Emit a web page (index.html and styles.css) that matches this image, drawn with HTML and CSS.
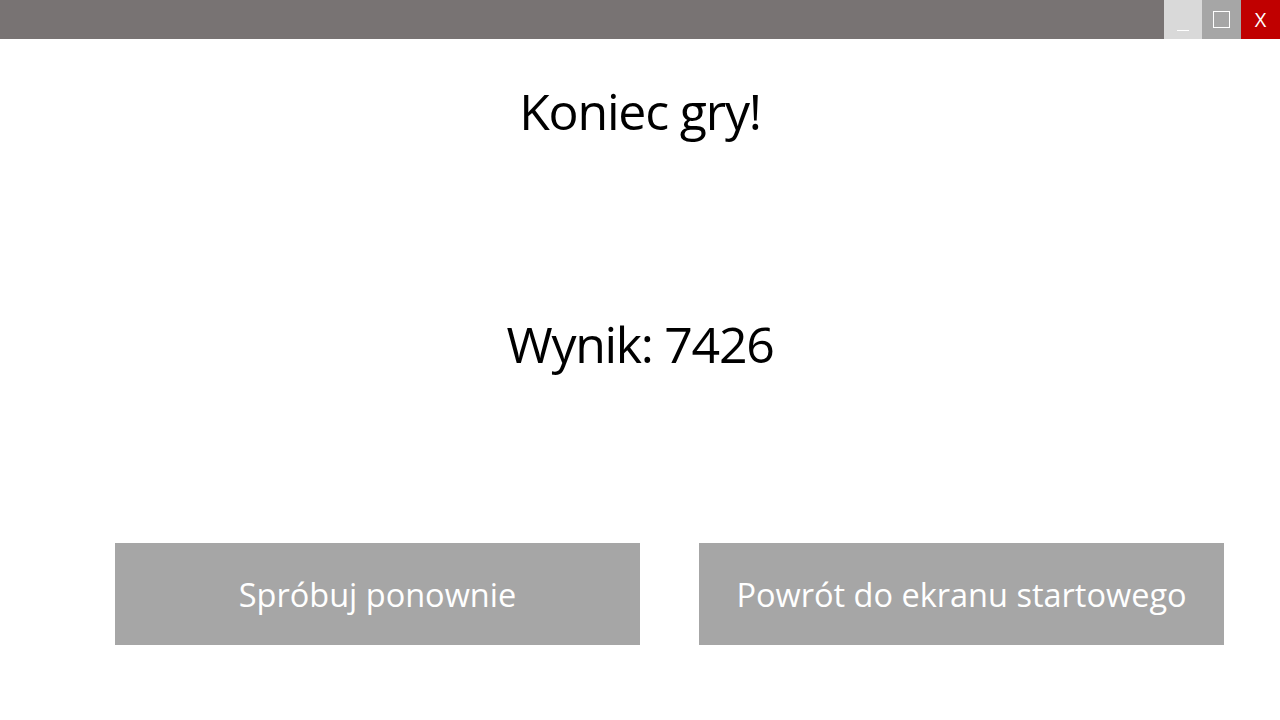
FILE: index.html
```html
<!DOCTYPE html>
<html lang="pl">
<head>
<meta charset="utf-8">
<title>Koniec gry</title>
<link rel="stylesheet" href="styles.css">
</head>
<body>
<div class="app">
  <header class="titlebar">
    <div class="win-controls">
      <div class="ctl ctl-min"><span class="min-line"></span></div>
      <div class="ctl ctl-max"><span class="max-box"></span></div>
      <div class="ctl ctl-close">X</div>
    </div>
  </header>
  <main class="content">
    <h1 class="title">Koniec gry!</h1>
    <div class="score">Wynik: 7426</div>
    <div class="actions">
      <div class="btn">Spróbuj ponownie</div>
      <div class="btn">Powrót do ekranu startowego</div>
    </div>
  </main>
</div>
</body>
</html>
```
FILE: styles.css
```css
* { box-sizing: border-box; }
html, body { margin: 0; padding: 0; }
body {
  width: 1280px;
  height: 720px;
  overflow: hidden;
  background: #ffffff;
  font-family: "Open Sans", "Noto Sans", sans-serif;
  color: #000;
}
.app { display: flex; flex-direction: column; height: 720px; }
.titlebar {
  height: 39px;
  background: #787373;
  display: flex;
  justify-content: flex-end;
}
.win-controls { display: flex; }
.ctl {
  width: 39px;
  height: 39px;
  display: flex;
  align-items: center;
  justify-content: center;
}
.ctl-min { width: 38px; background: #d9d9d9; align-items: flex-end; padding-bottom: 8px; }
.min-line { width: 12px; height: 1px; background: #ffffff; }
.ctl-max { background: #a6a6a6; }
.max-box { width: 17px; height: 17px; border: 1px solid #ffffff; }
.ctl-close { background: #c00000; color: #fff; font-size: 20px; }
.content {
  display: flex;
  flex-direction: column;
  align-items: center;
}
.title {
  margin: 37px 0 0;
  font-weight: 400;
  font-size: 50px;
  line-height: 70px;
  letter-spacing: -1.2px;
}
.score {
  margin-top: 163px;
  font-size: 50px;
  line-height: 70px;
  letter-spacing: -1.3px;
}
.actions {
  margin-top: 164px;
  display: flex;
  gap: 59px;
  padding-left: 115px;
  align-self: stretch;
}
.btn {
  width: 525px;
  height: 102px;
  background: #a6a6a6;
  color: #ffffff;
  font-size: 32.5px;
  display: flex;
  align-items: center;
  justify-content: center;
}
```
